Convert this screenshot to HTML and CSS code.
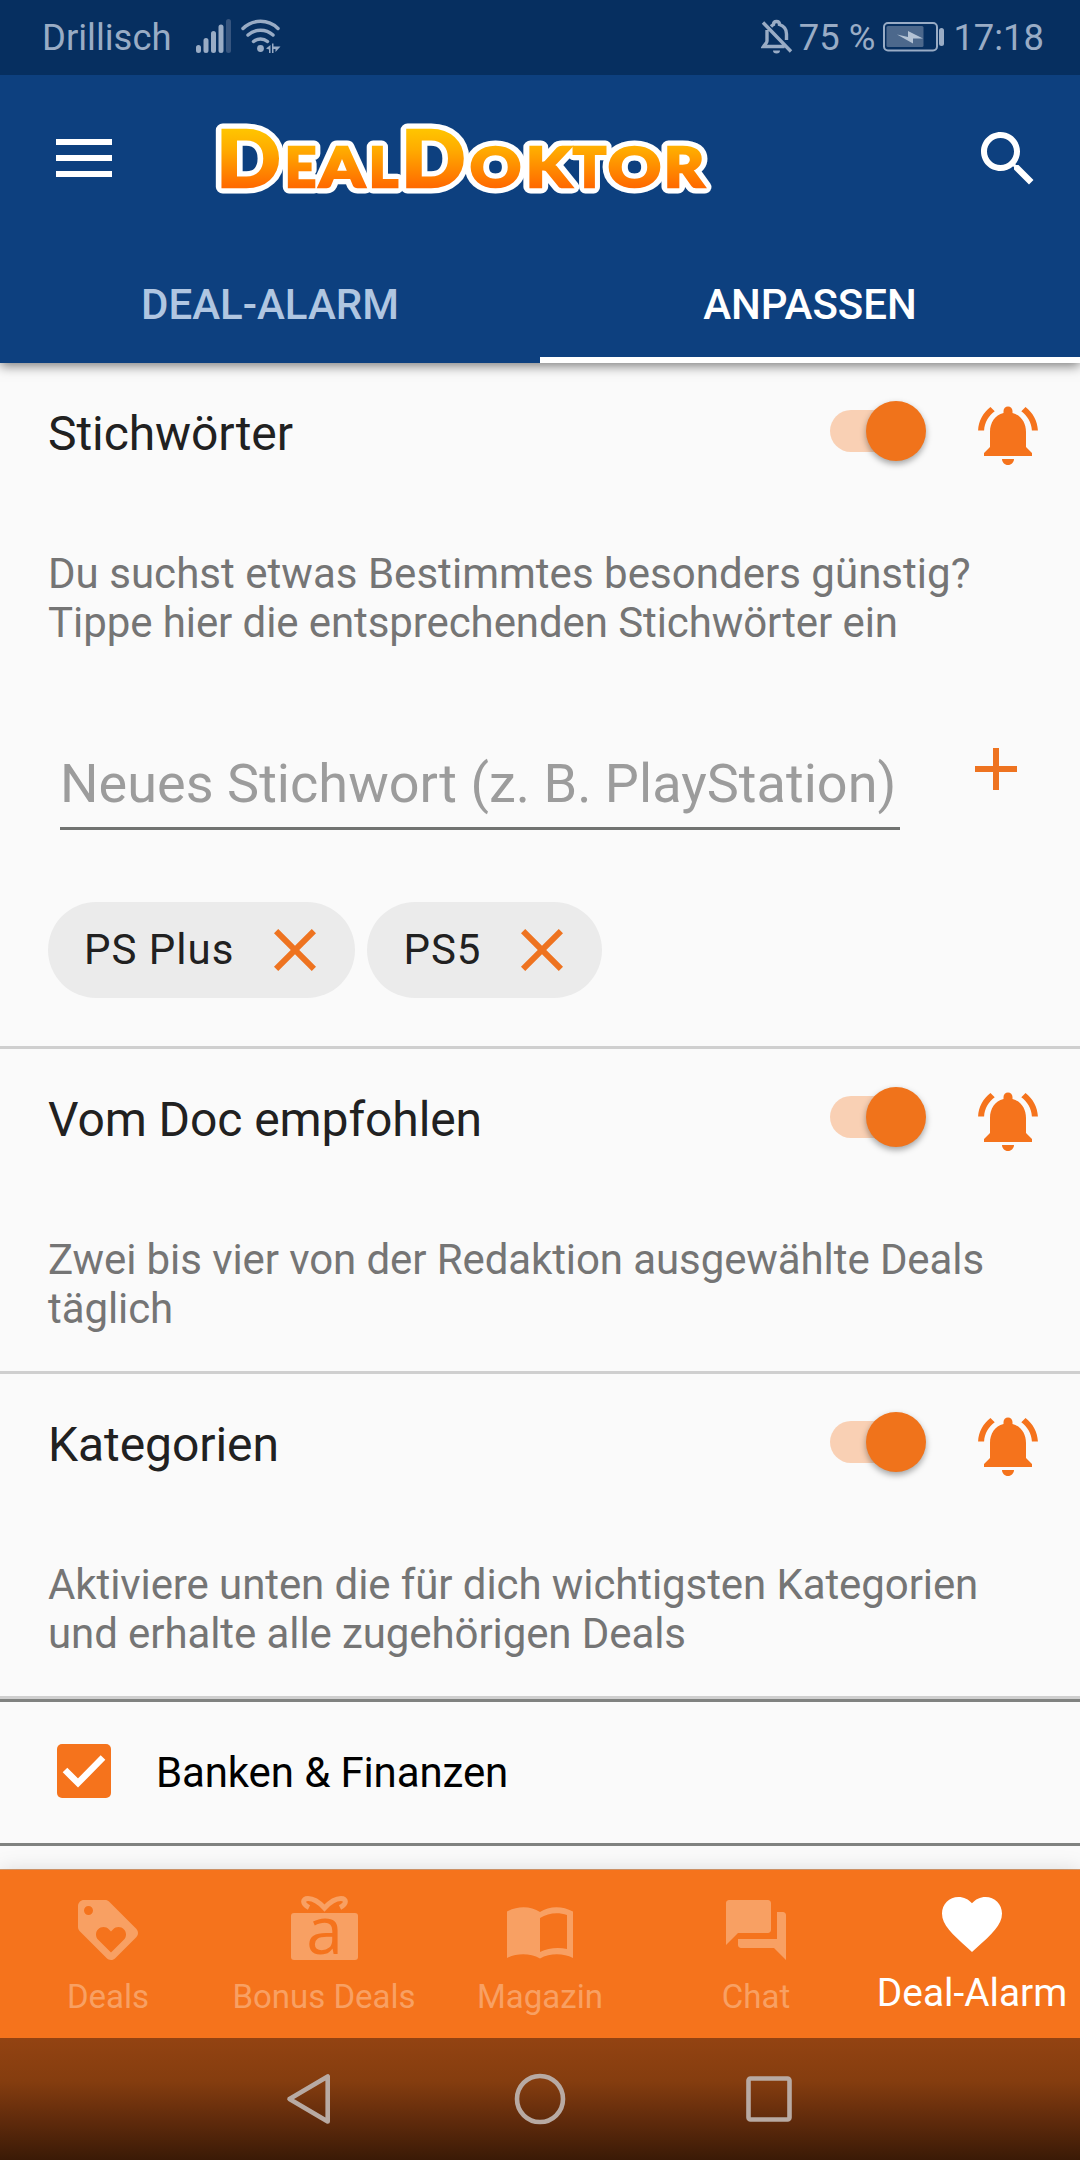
FILE: index.html
```html
<!DOCTYPE html>
<html lang="de">
<head>
<meta charset="utf-8">
<title>DealDoktor – Deal-Alarm</title>
<link rel="stylesheet" href="styles.css">
</head>
<body>
<svg class="defs" width="0" height="0" aria-hidden="true">
  <symbol id="bell" viewBox="0 0 24 24"><path d="M7.58 4.08L6.15 2.65C3.75 4.48 2.17 7.3 2.03 10.5h2c.15-2.65 1.51-4.97 3.55-6.42zm12.39 6.42h2c-.15-3.2-1.73-6.02-4.12-7.85l-1.42 1.43c2.02 1.45 3.39 3.77 3.54 6.42zM18 11c0-3.07-1.64-5.64-4.5-6.32V4c0-.83-.67-1.5-1.5-1.5s-1.5.67-1.5 1.5v.68C7.63 5.36 6 7.92 6 11v5l-2 2v1h16v-1l-2-2v-5zm-6 11c1.1 0 2-.9 2-2h-4c0 1.1.9 2 2 2z"/></symbol>
  <symbol id="close" viewBox="0 0 24 24"><path d="M19 6.41 17.59 5 12 10.59 6.41 5 5 6.41 10.59 12 5 17.59 6.41 19 12 13.41 17.59 19 19 17.59 13.41 12z"/></symbol>
</svg>

<header class="top">
  <div class="status">
    <span class="carrier">Drillisch</span>
    <svg class="signal" viewBox="0 0 36 34"><path d="M2.5 28.5v3M10 21.5v10M17.5 14.5v17M25 8v23.5"/><path class="faint" d="M32.5 2.5v29"/></svg>
    <svg class="wifi" viewBox="0 0 40 36"><path d="M2 9.5a25 25 0 0 1 35 0M7 16a19 19 0 0 1 25 0M12.5 22.5a11 11 0 0 1 14 0"/><circle cx="19.500" cy="29.500" r="3.400"/><path class="solid" d="M25 29.5l4.500-3.500v8h-1.500v-3.500zM31 24.5h1.500v3h7l-5 5.500v-3h-2v4h-1.500z"/></svg>
    <span class="grow"></span>
    <svg class="mute" viewBox="0 0 32 36"><path d="M6 11v11c0 2-2 3-3.500 5.500h21M10 7.500C11 6.500 11.500 6 12.500 5.500c0-4 6-4 6 0C23 7 25.500 10.500 25.500 15v6M2 3.500l28 29"/><path class="solid" d="M12 31.500h7a3.500 3 0 0 1-7 0z"/></svg>
    <span class="percent">75 %</span>
    <svg class="battery" viewBox="0 0 62 30"><rect class="shell" x="1" y="1" width="53" height="27.500" rx="4"/><rect class="charge" x="3.500" y="4" width="37" height="21" rx="1.500"/><path class="bolt" d="M14 12.500l11 2.500 0-6 15 7.500-10 0 0 5z"/><rect class="tip" x="56" y="6" width="5" height="18" rx="2.500"/></svg>
    <span class="clock">17:18</span>
  </div>
  <div class="appbar">
    <svg class="menu" viewBox="0 0 56 38"><path d="M0 0h56v6H0zM0 16h56v6H0zM0 32h56v6H0z"/></svg>
    <svg class="logo" viewBox="0 0 500 80" role="img" aria-label="DealDoktor">
      <defs>
        <linearGradient id="gold" gradientUnits="userSpaceOnUse" x1="0" y1="12" x2="0" y2="69"><stop offset="0" stop-color="#ffc400"/><stop offset=".35" stop-color="#ffab00"/><stop offset="1" stop-color="#ff6a00"/></linearGradient>
        <g id="wordmark">
          <text class="cap" x="0.500" y="68.500" textLength="64" lengthAdjust="spacingAndGlyphs">D</text>
          <text class="small" x="69" y="68.500" textLength="31" lengthAdjust="spacingAndGlyphs">E</text>
          <text class="small" x="103.500" y="68.500" textLength="45" lengthAdjust="spacingAndGlyphs">A</text>
          <text class="small" x="153" y="68.500" textLength="29" lengthAdjust="spacingAndGlyphs">L</text>
          <text class="cap" x="185.300" y="68.500" textLength="64" lengthAdjust="spacingAndGlyphs">D</text>
          <text class="small" x="254" y="68.500" textLength="51" lengthAdjust="spacingAndGlyphs">O</text>
          <text class="small" x="310" y="68.500" textLength="45" lengthAdjust="spacingAndGlyphs">K</text>
          <text class="small" x="357" y="68.500" textLength="33" lengthAdjust="spacingAndGlyphs">T</text>
          <text class="small" x="392" y="68.500" textLength="53" lengthAdjust="spacingAndGlyphs">O</text>
          <text class="small" x="448" y="68.500" textLength="40" lengthAdjust="spacingAndGlyphs">R</text>
        </g>
      </defs>
      <use class="outline" href="#wordmark"/>
      <use class="fill" href="#wordmark"/>
    </svg>
    <span class="grow"></span>
    <svg class="search" viewBox="0 0 24 24"><path d="M15.5 14h-.79l-.28-.27C15.41 12.59 16 11.11 16 9.5 16 5.91 13.09 3 9.5 3S3 5.91 3 9.5 5.91 16 9.5 16c1.61 0 3.09-.59 4.23-1.57l.27.28v.79l5 4.99L20.49 19l-4.99-5zm-6 0C7.01 14 5 11.99 5 9.5S7.01 5 9.5 5 14 7.01 14 9.5 11.99 14 9.5 14z"/></svg>
  </div>
  <nav class="tabs"><a class="tab">DEAL-ALARM</a><a class="tab active">ANPASSEN</a></nav>
</header>

<main class="content">
  <section class="block">
    <div class="head"><h2>Stichwörter</h2><span class="switch"><i></i></span><svg class="bell"><use href="#bell"/></svg></div>
    <p class="hint">Du suchst etwas Bestimmtes besonders günstig? Tippe hier die entsprechenden Stichwörter ein</p>
    <div class="entry"><div class="field">Neues Stichwort (z. B. PlayStation)</div><svg class="plus" viewBox="0 0 24 24"><path d="M19 13h-6v6h-2v-6H5v-2h6V5h2v6h6v2z"/></svg></div>
    <div class="chips"><span class="chip"><span>PS Plus</span><svg><use href="#close"/></svg></span><span class="chip"><span>PS5</span><svg><use href="#close"/></svg></span></div>
  </section>
  <section class="block">
    <div class="head"><h2>Vom Doc empfohlen</h2><span class="switch"><i></i></span><svg class="bell"><use href="#bell"/></svg></div>
    <p>Zwei bis vier von der Redaktion ausgewählte Deals täglich</p>
  </section>
  <section class="block">
    <div class="head"><h2>Kategorien</h2><span class="switch"><i></i></span><svg class="bell"><use href="#bell"/></svg></div>
    <p>Aktiviere unten die für dich wichtigsten Kategorien und erhalte alle zugehörigen Deals</p>
  </section>
  <div class="category">
    <svg class="check" viewBox="0 0 54 54"><rect width="54" height="54" rx="5"/><path d="M8 26l13 13 25-25.500"/></svg>
    <span>Banken &amp; Finanzen</span>
  </div>
</main>

<nav class="bottom">
  <a class="item"><svg viewBox="0 0 24 24"><path d="M21.41 11.58l-9-9C12.05 2.22 11.55 2 11 2H4c-1.1 0-2 .9-2 2v7c0 .55.22 1.05.59 1.42l9 9c.36.36.86.58 1.41.58.55 0 1.05-.22 1.41-.59l7-7c.37-.36.59-.86.59-1.41 0-.55-.23-1.06-.59-1.42zM5.5 7C4.67 7 4 6.33 4 5.5S4.67 4 5.5 4 7 4.67 7 5.5 6.33 7 5.5 7zm11.77 8.27L13 19.54l-4.27-4.27C8.28 14.81 8 14.19 8 13.5c0-1.38 1.12-2.5 2.5-2.5.69 0 1.32.28 1.77.74l.73.72.73-.73c.45-.45 1.08-.73 1.77-.73 1.38 0 2.500 1.12 2.500 2.500 0 .69-.28 1.32-.73 1.77z"/></svg><span>Deals</span></a>
  <a class="item"><svg class="gift" viewBox="0 0 72 72"><rect x="3" y="19" width="67" height="47" rx="3"/><path class="ribbon" d="M21 13.500C14 10 14 4.500 20 4.500c6 0 11 3.500 16.500 9.500 5.500-6 10.500-9.500 16.500-9.500 6 0 6 5.500-1 9"/><text x="36.500" y="60" text-anchor="middle">a</text></svg><span>Bonus Deals</span></a>
  <a class="item"><svg viewBox="0 0 72 72"><path fill-rule="evenodd" d="M3 17.500C14 11.500 27 12 36 18c9-6 22-6.500 33-.5v46.500c-10-5-23-5-33 .5-10-5.500-23-5.500-33-.5zM36 24v34c8-4 18-5 27-3V21c-9-3-19-2-27 3z"/></svg><span>Magazin</span></a>
  <a class="item"><svg viewBox="0 0 24 24"><path d="M21 6h-2v9H6v2c0 .55.45 1 1 1h11l4 4V7c0-.55-.45-1-1-1zm-4 6V3c0-.55-.45-1-1-1H3c-.55 0-1 .45-1 1v14l4-4h10c.55 0 1-.45 1-1z"/></svg><span>Chat</span></a>
  <a class="item active"><svg viewBox="0 0 24 24"><path d="M12 21.35l-1.45-1.32C5.4 15.36 2 12.28 2 8.5 2 5.42 4.42 3 7.5 3c1.74 0 3.41.81 4.500 2.09C13.09 3.81 14.76 3 16.5 3 19.58 3 22 5.42 22 8.5c0 3.78-3.4 6.86-8.55 11.54L12 21.35z"/></svg><span>Deal-Alarm</span></a>
</nav>
<div class="system">
  <svg viewBox="0 0 56 56"><path d="M44.700 5.500v45L6.500 28z"/></svg>
  <svg viewBox="0 0 56 56"><circle cx="28" cy="28" r="23"/></svg>
  <svg viewBox="0 0 56 56"><rect x="7.500" y="7.500" width="41" height="41" rx="2"/></svg>
</div>
</body>
</html>
```
FILE: styles.css
```css
* { box-sizing: border-box; }
body {
  margin: 0;
  width: 1080px;
  height: 2160px;
  overflow: hidden;
  display: flex;
  flex-direction: column;
  background: #fafafa;
  font-family: Roboto, sans-serif;
}
svg { display: block; flex: none; }
.defs { display: none; }
.grow { flex: 1; }

.top {
  height: 363px;
  flex: none;
  background: #0d407f;
  box-shadow: 0 3px 11px rgba(0, 0, 0, .5);
  position: relative;
}
.status {
  height: 75px;
  padding: 0 36px 0 42px;
  display: flex;
  align-items: center;
  background: #062f60;
  color: #99acc5;
  font-size: 36.4px;
  line-height: 44px;
}
.signal, .wifi, .mute { fill: none; stroke: #99acc5; }
.signal { width: 36px; height: 34px; margin: -4px 0 0 25px; stroke-width: 5; stroke-linecap: round; }
.signal .faint { stroke: #36557f; }
.wifi { width: 40px; height: 36px; margin: -2px 0 0 9px; stroke-width: 3.5px; stroke-linecap: round; }
.wifi circle, .wifi .solid, .mute .solid { fill: #99acc5; stroke: none; }
.mute { width: 32px; height: 36px; margin: -2px 6px 0 0; stroke-width: 3.4px; }
.battery { width: 62px; height: 30px; margin: -2px 0 0 8px; }
.shell { fill: none; stroke: #99acc5; stroke-width: 2; }
.charge { fill: #4c688c; }
.bolt { fill: #b4c3d5; }
.tip { fill: #99acc5; }
.clock { margin-left: 8px; }

.appbar { height: 168px; padding: 0 36px 0 56px; display: flex; align-items: center; }
.menu { width: 56px; height: 38px; margin-top: -2px; fill: #fff; }
.logo { width: 500px; height: 80px; margin: -3px 0 0 104px; overflow: visible; font-family: Lato, sans-serif; font-weight: 900; }
.cap { font-size: 78px; }
.small { font-size: 56px; }
.outline { fill: #fff; stroke: #fff; stroke-width: 13px; stroke-linejoin: round; }
.fill { fill: url(#gold); stroke: url(#gold); stroke-width: 2.6px; }
.search { width: 72px; height: 72px; fill: #fff; }

.tabs { height: 120px; display: flex; }
.tab {
  flex: 1;
  padding-top: 37px;
  text-align: center;
  font-size: 42px;
  font-weight: 500;
  line-height: 49px;
  color: #b0c6e1;
}
.tab.active { color: #fff; border-bottom: 6px solid #fff; }

.content { flex: 1; min-height: 0; }
.block { padding: 0 36px 38px 48px; border-bottom: 3px solid #cfcfcf; }
.head { height: 144px; display: flex; align-items: flex-start; }
.head h2 {
  flex: 1;
  margin: 43px 0 0;
  font-size: 48px;
  font-weight: 400;
  line-height: 56px;
  letter-spacing: -.08px;
  color: #212121;
}
.switch {
  width: 88px;
  height: 42px;
  margin: 47px 54px 0 0;
  border-radius: 21px;
  background: #f9d0b4;
  display: flex;
  align-items: center;
  justify-content: flex-end;
}
.switch i {
  width: 60px;
  height: 60px;
  flex: none;
  margin-right: -7.5px;
  border-radius: 50%;
  background: #f0731b;
  box-shadow: 0 3px 6px rgba(0, 0, 0, .35);
}
.bell { width: 72px; height: 72px; margin-top: 36px; fill: #f5731c; }
.block p {
  height: 98px;
  margin: 42px 0 0;
  font-size: 42px;
  line-height: 49px;
  letter-spacing: -.09px;
  color: #757575;
}
.block .hint::first-line { letter-spacing: .03px; }
.entry { display: flex; padding: 94px 12px 0 12px; margin-top: -3px; }
.field {
  width: 840px;
  height: 92px;
  padding-top: 14px;
  border-bottom: 3px solid #717371;
  font-size: 54px;
  line-height: 63px;
  letter-spacing: .04px;
  color: #9c9c9c;
  white-space: nowrap;
}
.plus { width: 72px; height: 72px; margin: -5px 0 0 60px; fill: #ee7320; }
.chips { display: flex; gap: 12px; padding: 72px 0 10px; }
.chip {
  height: 96px;
  padding: 0 24px 0 36px;
  border-radius: 48px;
  display: flex;
  align-items: center;
  gap: 25px;
  background: #ebebeb;
  color: #212121;
  font-size: 42px;
  letter-spacing: 1px;
}
.chip span { margin-top: -2px; }
.chip svg { width: 72px; height: 72px; fill: #ee7320; }

.category {
  height: 147px;
  border: solid #808280;
  border-width: 3px 0;
  padding-left: 57px;
  display: flex;
  align-items: center;
  gap: 45px;
  font-size: 42px;
  letter-spacing: -.12px;
  color: #000;
}
.check { width: 54px; height: 54px; margin-top: -3px; }
.check rect { fill: #f5731c; }
.check path { fill: none; stroke: #fff; stroke-width: 6.5px; }

.bottom {
  height: 168px;
  flex: none;
  display: flex;
  background: #f5731c;
  box-shadow: 0 0 20px rgba(0, 0, 0, .13), 0 -1px 0 #d89a6c;
}
.item {
  width: 216px;
  padding-top: 24px;
  display: flex;
  flex-direction: column;
  align-items: center;
  color: #f8a063;
  font-size: 33px;
  line-height: 40px;
  white-space: nowrap;
}
.item svg { width: 72px; height: 72px; margin-bottom: 11px; fill: currentColor; }
.item .gift { overflow: visible; }
.item .ribbon { fill: none; stroke: currentColor; stroke-width: 5px; }
.item text { fill: #f5731c; font: 66px/1 "Open Sans", sans-serif; }
.item.active { padding-top: 18px; color: #fff; font-size: 38.8px; }
.item.active svg { margin-bottom: 13px; }

.system {
  height: 122px;
  flex: none;
  display: flex;
  justify-content: center;
  align-items: center;
  gap: 173px;
  background: linear-gradient(#934312, #853d0f 35%, #632c0c 65%, #3a1a06);
}
.system svg { width: 56px; height: 56px; fill: none; stroke: #b8aaa3; stroke-width: 4.6px; stroke-linejoin: round; }
```
